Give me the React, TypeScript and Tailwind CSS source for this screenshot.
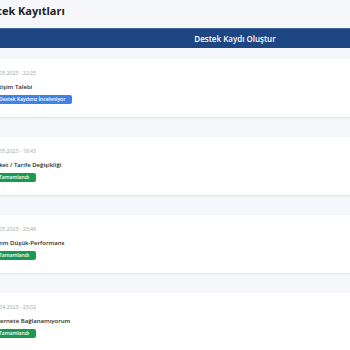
const tickets = [
  { date: "25.05.2023 - 22:25", title: "İletişim Talebi", status: "Destek Kaydınız İnceleniyor", open: true },
  { date: "17.05.2023 - 18:43", title: "Paket / Tarife Değişikliği", status: "Tamamlandı", open: false },
  { date: "02.05.2023 - 23:48", title: "Hızım Düşük-Performans", status: "Tamamlandı", open: false },
  { date: "28.04.2023 - 23:02", title: "İnternete Bağlanamıyorum", status: "Tamamlandı", open: false },
];

export default function App() {
  return (
    <div className="h-[350px] w-[350px] overflow-hidden bg-[#f6f7fa] font-['Open_Sans',sans-serif]">
      <div className="-ml-[24px] w-[518px]">
        <h1 className="flex h-[22px] items-center pl-[1px] text-[11px] font-bold text-[#222]">Destek Kayıtları</h1>
        <button className="mt-[6px] flex h-[20px] w-full items-center justify-center border-t border-[#3d64a0] bg-[#1d4682] text-[8px] font-semibold text-white">
          Destek Kaydı Oluştur
        </button>
        <div className="mt-[11px] flex flex-col gap-[20px]">
          {tickets.map((t) => (
            <div
              key={t.title}
              className="h-[58px] bg-white px-[16px] pt-[10px] shadow-[0_1px_2px_rgba(0,0,0,0.09)]"
            >
              <p className="h-[8px] text-[5.2px] leading-[8px] text-[#a3a3a3]">{t.date}</p>
              <p className="mt-[4px] h-[12px] text-[6px] font-semibold leading-[12px] text-[#2a2a2a]">{t.title}</p>
              <div
                className={`mt-[2px] flex h-[9px] w-fit items-center rounded-[2px] px-[7px] text-[5px] font-semibold leading-none text-white ${
                  t.open ? "bg-[#3f82e6]" : "bg-[#1a9a50]"
                }`}
              >
                {t.status}
              </div>
            </div>
          ))}
        </div>
      </div>
    </div>
  );
}
